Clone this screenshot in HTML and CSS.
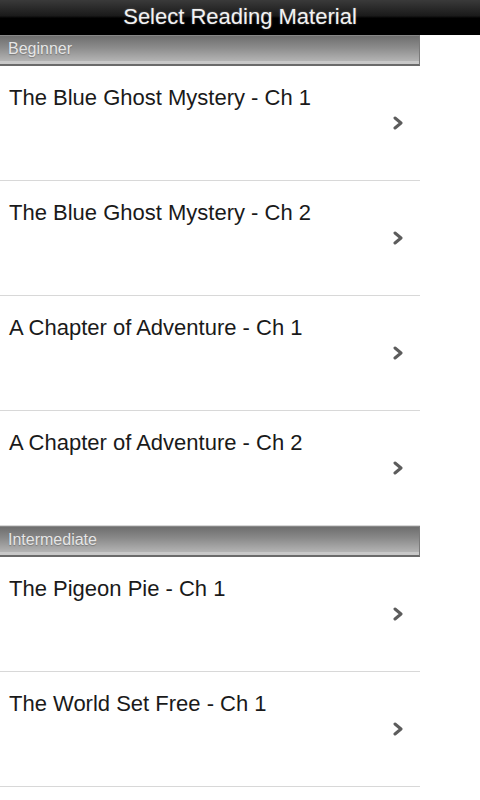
FILE: index.html
```html
<!DOCTYPE html>
<html>
<head>
<meta charset="utf-8">
<link rel="stylesheet" href="styles.css">
</head>
<body>
<header class="titlebar">Select Reading Material</header>
<main class="list">
  <div class="section">Beginner</div>
  <div class="item"><span class="label">The Blue Ghost Mystery - Ch 1</span><svg class="chev" viewBox="0 0 12 14"><path d="M3 2 L9 7 L3 12" /></svg></div>
  <div class="item"><span class="label">The Blue Ghost Mystery - Ch 2</span><svg class="chev" viewBox="0 0 12 14"><path d="M3 2 L9 7 L3 12" /></svg></div>
  <div class="item"><span class="label">A Chapter of Adventure - Ch 1</span><svg class="chev" viewBox="0 0 12 14"><path d="M3 2 L9 7 L3 12" /></svg></div>
  <div class="item"><span class="label">A Chapter of Adventure - Ch 2</span><svg class="chev" viewBox="0 0 12 14"><path d="M3 2 L9 7 L3 12" /></svg></div>
  <div class="section">Intermediate</div>
  <div class="item"><span class="label">The Pigeon Pie - Ch 1</span><svg class="chev" viewBox="0 0 12 14"><path d="M3 2 L9 7 L3 12" /></svg></div>
  <div class="item"><span class="label">The World Set Free - Ch 1</span><svg class="chev" viewBox="0 0 12 14"><path d="M3 2 L9 7 L3 12" /></svg></div>
</main>
</body>
</html>
```
FILE: styles.css
```css
html, body {
  margin: 0;
  padding: 0;
  background: #fff;
  font-family: "Liberation Sans", Arial, sans-serif;
  overflow: hidden;
}
.titlebar {
  height: 35px;
  box-sizing: border-box;
  background: linear-gradient(to bottom, #3a3a3a 0%, #1a1a1a 45%, #000 52%, #000 100%);
  color: #f2f2f2;
  font-size: 22px;
  line-height: 34px;
  text-align: center;
  text-shadow: 0 0 2px rgba(255,255,255,0.35);
}
.list {
  width: 420px;
}
.section {
  height: 31px;
  box-sizing: border-box;
  padding-left: 8px;
  font-size: 16px;
  line-height: 25px;
  color: #e6e6e6;
  text-shadow: 0 1px 1px rgba(0,0,0,0.25);
  background: linear-gradient(to bottom, #6e6e6e 0%, #8a8a8a 40%, #b4b4b4 90%, #c8c8c8 91%, #c8c8c8 96%);
  border-top: 1px solid #888;
  border-bottom: 2px solid #6a6a6a;
  border-right: 1px solid #7a7a7a;
}
.item {
  height: 115px;
  box-sizing: border-box;
  border-bottom: 1px solid #d8d8d8;
  display: flex;
}
.label {
  padding: 19px 0 0 9px;
  font-size: 22px;
  line-height: 26px;
  color: #1a1a1a;
  flex: 1;
}
.chev {
  width: 12px;
  height: 14px;
  margin: 50px 16px 0 0;
  fill: none;
  stroke: #5c5c5c;
  stroke-width: 3;
  stroke-linecap: round;
  stroke-linejoin: round;
}
```
